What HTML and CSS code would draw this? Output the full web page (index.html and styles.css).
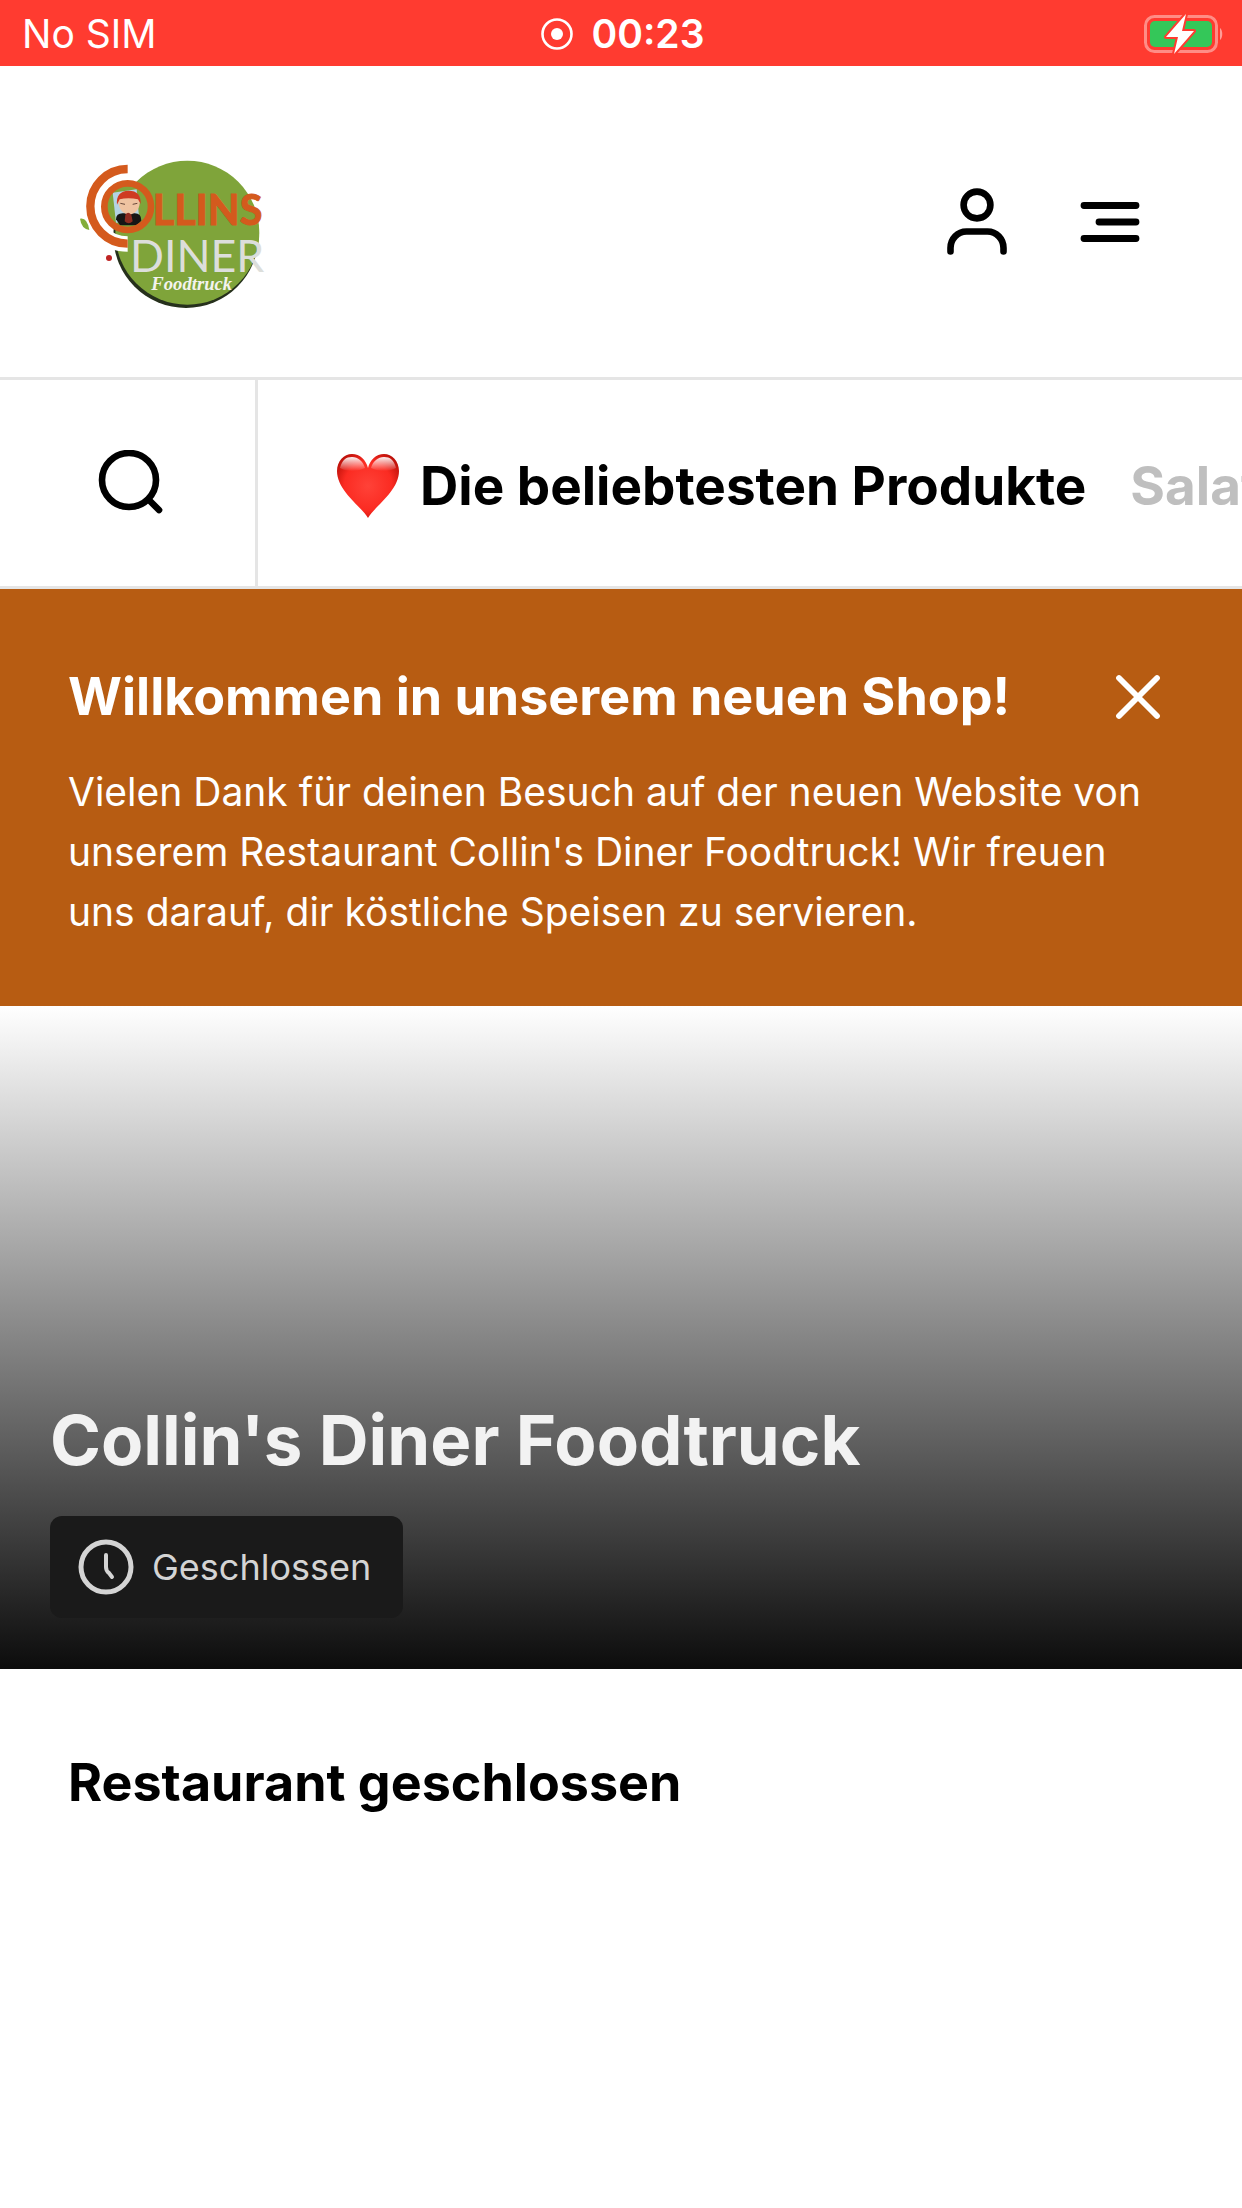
FILE: index.html
```html
<!DOCTYPE html>
<html lang="de">
<head>
<meta charset="utf-8">
<meta name="viewport" content="width=device-width, initial-scale=1">
<title>Collin's Diner Foodtruck</title>
<link rel="stylesheet" href="styles.css">
</head>
<body>
<div class="status">
  <span>No SIM</span>
  <span class="status-rec">
    <svg width="32" height="32" viewBox="0 0 32 32" aria-hidden="true"><circle cx="16" cy="16" r="14.5" fill="none" stroke="#fff" stroke-width="2.6"/><circle cx="16" cy="16" r="6" fill="#fff"/></svg>
    <span class="status-time">00:23</span>
  </span>
  <svg class="battery" width="80" height="42" viewBox="0 0 80 42" aria-hidden="true">
    <rect x="1.5" y="3.5" width="71" height="35" rx="9" fill="none" stroke="#fff" stroke-opacity=".42" stroke-width="3"/>
    <path d="M76 15c3 2 3 10 0 12z" fill="#fff" fill-opacity=".5"/>
    <rect x="6" y="8" width="62" height="26" rx="5" fill="#34c759"/>
    <path d="M42 1 22 24h12l-4 17 20-23H38z" fill="#fff" stroke="#ff3b30" stroke-width="4" stroke-linejoin="round" paint-order="stroke"/>
  </svg>
</div>

<header class="header">
  <a class="logo" href="#" aria-label="Collins Diner Foodtruck">
    <svg width="230" height="180" viewBox="0 -26 690 540">
      <circle cx="378" cy="284" r="218" fill="#26301c"/>
      <circle cx="382" cy="276" r="216" fill="#7fa43a"/>
      <path d="M203 84A113 113 0 0 0 203 310" fill="none" stroke="#fff" stroke-width="46"/>
      <circle cx="203" cy="198" r="68" fill="#7fa43a"/>
      <path d="M158 156 230 146 238 240 168 246z" fill="#b4d3e4"/>
      <path d="M168 236q0-18 20-18h36q20 0 20 22l-14 14h-50z" fill="#161616"/>
      <path d="M174 176q0-24 32-24t34 26q0 40-34 44-30-4-32-46z" fill="#efc3a1"/>
      <path d="M171 192q-4-41 35-42 38 0 36 40l-8-14q-30-6-55 0z" fill="#cf3b22"/>
      <path d="M181 188l14 3M218 191l14-3" stroke="#68483a" stroke-width="3"/>
      <path d="M196 222q8-12 18 0l4 20q-12 12-24 0z" fill="#8e2b20"/>
      <path d="M203 85A112 112 0 0 0 203 309" fill="none" stroke="#d45a1d" stroke-width="25"/>
      <circle cx="203" cy="198" r="70" fill="none" stroke="#d45a1d" stroke-width="20"/>
      <path d="M60 234q22-4 28 34-24-4-28-34z" fill="#83ad39"/>
      <circle cx="147" cy="352" r="9" fill="#bf2423"/>
      <text class="logo-name" x="278" y="252">LLINS</text>
      <text class="logo-diner" x="210" y="394">DINER</text>
      <text class="logo-truck" x="274" y="448">Foodtruck</text>
    </svg>
  </a>
  <div class="header-actions">
    <button class="icon-button" type="button" aria-label="Konto">
      <svg width="60" height="72" viewBox="0 0 60 72" fill="none" stroke="#000" stroke-width="6.6" stroke-linecap="round"><circle cx="30" cy="19" r="13.4"/><path d="M3.5 65.500v-3.500c0-9 7-16.500 16-16.500h21c9 0 16 7.500 16 16.500v3.500"/></svg>
    </button>
    <button class="icon-button" type="button" aria-label="Menü">
      <svg width="60" height="72" viewBox="0 0 60 72" fill="none" stroke="#000" stroke-width="6.800" stroke-linecap="round"><path d="M4 19.500h52M19 36h37M4 52.500h52"/></svg>
    </button>
  </div>
</header>

<nav class="categories">
  <button class="search" type="button" aria-label="Suchen">
    <svg width="66" height="66" viewBox="0 0 66 66" fill="none" stroke="#000" stroke-width="6.600" stroke-linecap="round"><circle cx="31" cy="30" r="27"/><path d="M51 50l10 10"/></svg>
  </button>
  <div class="category-list">
    <a class="category category-active" href="#beliebt">
      <svg width="64" height="66" viewBox="0 0 64 66" aria-hidden="true">
        <defs>
          <radialGradient id="heart" cx=".5" cy=".5" r=".62"><stop offset="0" stop-color="#ff4238"/><stop offset=".62" stop-color="#fb2b22"/><stop offset="1" stop-color="#b50d06"/></radialGradient>
          <linearGradient id="shine" x1="0" y1="0" x2="0" y2="1"><stop offset="0" stop-color="#fff" stop-opacity=".95"/><stop offset="1" stop-color="#fff" stop-opacity="0"/></linearGradient>
        </defs>
        <path d="M32 65C26 54 1 38 1 18 1 8 8 1 16 1c8 0 14 6 16 14C34 7 40 1 48 1c8 0 15 7 15 17 0 20-25 36-31 47z" fill="url(#heart)"/>
        <path d="M4 15C6 7 10 4 16 4c6 0 11 4 13 11-8 4-18 4-25 0zM60 15C58 7 54 4 48 4c-6 0-11 4-13 11 8 4 18 4 25 0z" fill="url(#shine)"/>
      </svg>
      <span>Die beliebtesten Produkte</span>
    </a>
    <a class="category" href="#salate">Salate</a>
  </div>
</nav>

<main>
  <section class="banner">
    <div class="banner-head">
      <h2 class="heading">Willkommen in unserem neuen Shop!</h2>
      <button class="icon-button" type="button" aria-label="Schließen">
        <svg width="48" height="56" viewBox="0 0 48 56" fill="none" stroke="#fff" stroke-width="5.800" stroke-linecap="round"><path d="M5 9l38 38M43 9L5 47"/></svg>
      </button>
    </div>
    <p class="banner-text">Vielen Dank für deinen Besuch auf der neuen Website von unserem Restaurant Collin's Diner Foodtruck! Wir freuen uns darauf, dir köstliche Speisen zu servieren.</p>
  </section>

  <section class="hero">
    <h1 class="hero-title">Collin's Diner Foodtruck</h1>
    <div class="badge">
      <svg width="56" height="56" viewBox="0 0 56 56" fill="none" stroke="#d4d4d4" stroke-width="5" stroke-linecap="round" aria-hidden="true"><circle cx="28" cy="28" r="25"/><path d="M28 16v12q0 4 3 6l3 4" stroke-width="4"/></svg>
      <span>Geschlossen</span>
    </div>
  </section>

  <section class="notice">
    <h2 class="heading">Restaurant geschlossen</h2>
  </section>
</main>
</body>
</html>
```
FILE: styles.css
```css
* { box-sizing: border-box; }
body { margin: 0; background: #fff; color: #000; font-family: Inter, "Liberation Sans", sans-serif; }
h1, h2, p { margin: 0; }
svg { display: block; flex: none; }
button { margin: 0; padding: 0; border: 0; background: none; cursor: pointer; }
a { color: inherit; text-decoration: none; }

.status {
  display: grid;
  grid-template-columns: 1fr auto 1fr;
  align-items: center;
  height: 66px;
  padding: 2px 18px 0 22px;
  background: #ff3b30;
  color: #fff;
  font-size: 39px;
  line-height: 64px;
}
.status-rec { display: flex; align-items: center; gap: 18px; }
.status-time { font-weight: 600; }
.battery { justify-self: end; }

.header {
  display: flex;
  align-items: center;
  justify-content: space-between;
  height: 314px;
  padding: 0 102px 0 60px;
  border-bottom: 3px solid #e5e5e5;
}
.header-actions { display: flex; gap: 73px; }
.logo-name { font: bold 124px Lato, sans-serif; fill: #d45a1d; stroke: #d45a1d; stroke-width: 3px; }
.logo-diner { font: 400 134px Lato, sans-serif; fill: #dcdedb; }
.logo-truck { font: italic bold 56px "Liberation Serif", serif; fill: #f3f3ee; }

.categories { display: flex; height: 209px; border-bottom: 3px solid #e5e5e5; }
.search {
  display: flex;
  align-items: center;
  flex: none;
  width: 258px;
  padding-left: 98px;
  border-right: 3px solid #e5e5e5;
}
.category-list {
  display: flex;
  align-items: center;
  flex: 1;
  gap: 44px;
  min-width: 0;
  padding: 6px 0 0 78px;
  overflow: hidden;
}
.category {
  display: flex;
  align-items: center;
  flex: none;
  gap: 20px;
  color: #bfbfbf;
  font-size: 53px;
  font-weight: 700;
  line-height: 64px;
}
.category-active { color: #000; }

.heading { font-size: 52px; font-weight: 700; line-height: 64px; }

.banner { padding: 76px 80px 64px 68px; background: #b75c12; color: #fff; }
.banner-head { display: flex; align-items: center; justify-content: space-between; }
.banner-text { margin-top: 33px; font-size: 39px; line-height: 60px; }

.hero {
  display: flex;
  flex-direction: column;
  align-items: flex-start;
  justify-content: flex-end;
  gap: 32px;
  min-height: 663px;
  padding: 0 50px 51px;
  background: linear-gradient(#fff, #0c0c0c);
}
.hero-title { color: #f2f2f2; font-size: 69px; font-weight: 700; line-height: 88px; }
.badge {
  display: flex;
  align-items: center;
  gap: 18px;
  height: 102px;
  padding: 0 32px 0 28px;
  border-radius: 12px;
  background: #1a1a1a;
  color: #d4d4d4;
  font-size: 36px;
}

.notice { padding: 82px 68px; }
```
